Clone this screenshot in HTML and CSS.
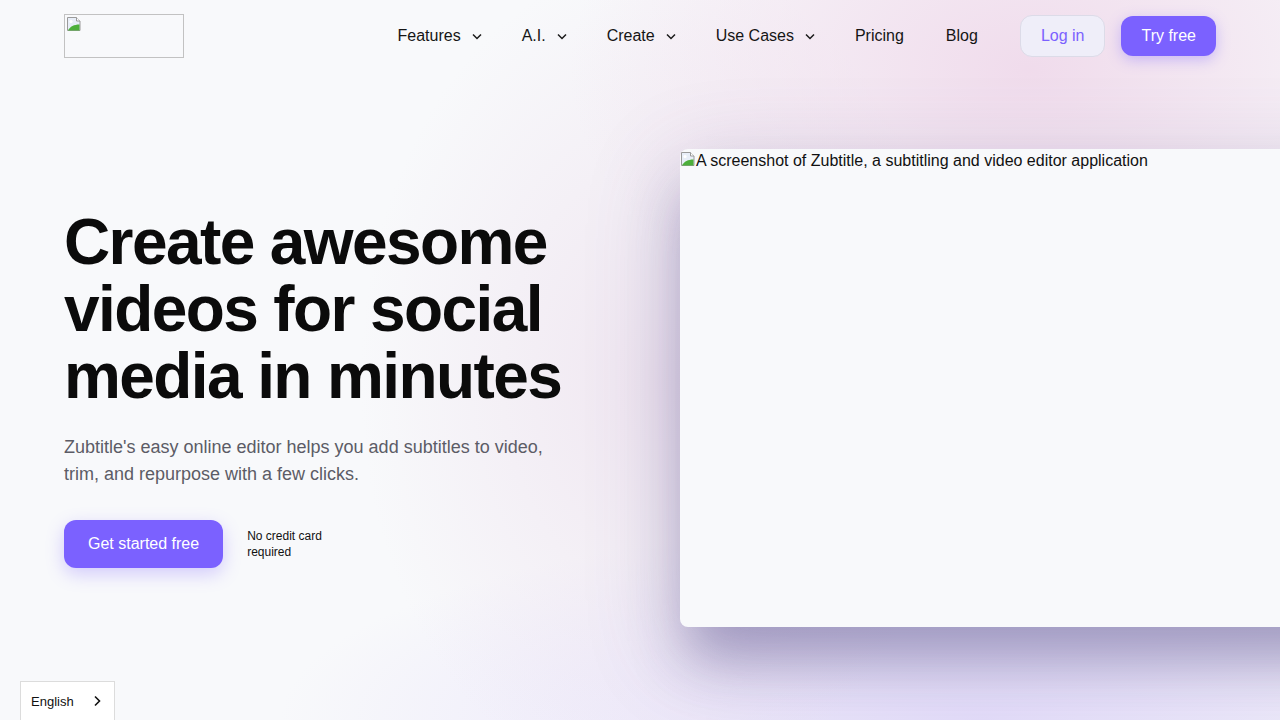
FILE: index.html
```html
<!DOCTYPE html>
<html lang="en">
<head>
<meta charset="utf-8">
<title>Zubtitle</title>
<link rel="stylesheet" href="styles.css">
</head>
<body>
<div class="glow"></div>
<header class="header">
  <a class="logo" href="#">
    <svg class="broken" width="16" height="16" viewBox="0 0 16 16"><path d="M1.5 1.5h9l3.5 3.5v9.5h-12.5z" fill="#e8eef8" stroke="#9a9a9a"/><path d="M10.5 1.5v3.5h3.5" fill="#fff" stroke="#9a9a9a"/><path d="M2 14.5c2-4 6-6 11.5-6v6z" fill="#4caf3a"/><circle cx="5" cy="5.5" r="1.6" fill="#fff"/></svg>
  </a>
  <div class="right">
    <nav class="nav">
      <a class="nav-item" href="#">Features<svg class="chev" viewBox="0 0 12 12"><path d="M2 4.5l4 4 4-4" fill="none" stroke="#1a1a1a" stroke-width="1.5"/></svg></a>
      <a class="nav-item" href="#">A.I.<svg class="chev" viewBox="0 0 12 12"><path d="M2 4.5l4 4 4-4" fill="none" stroke="#1a1a1a" stroke-width="1.5"/></svg></a>
      <a class="nav-item" href="#">Create<svg class="chev" viewBox="0 0 12 12"><path d="M2 4.5l4 4 4-4" fill="none" stroke="#1a1a1a" stroke-width="1.5"/></svg></a>
      <a class="nav-item" href="#">Use Cases<svg class="chev" viewBox="0 0 12 12"><path d="M2 4.5l4 4 4-4" fill="none" stroke="#1a1a1a" stroke-width="1.5"/></svg></a>
      <a class="nav-item plain" href="#">Pricing</a>
      <a class="nav-item plain" href="#">Blog</a>
    </nav>
    <div class="actions">
      <a class="btn-login" href="#">Log in</a>
      <a class="btn-try" href="#">Try free</a>
    </div>
  </div>
</header>

<main class="hero">
  <div class="hero-left">
    <h1 class="title">Create awesome videos for social media in minutes</h1>
    <p class="lead">Zubtitle's easy online editor helps you add subtitles to video, trim, and repurpose with a few clicks.</p>
    <div class="cta">
      <a class="btn-start" href="#">Get started free</a>
      <span class="note">No credit card required</span>
    </div>
  </div>
  <div class="hero-right">
    <div class="shot">
      <svg class="broken" width="16" height="16" viewBox="0 0 16 16"><path d="M1.5 1.5h9l3.5 3.5v9.5h-12.5z" fill="#e8eef8" stroke="#9a9a9a"/><path d="M10.5 1.5v3.5h3.5" fill="#fff" stroke="#9a9a9a"/><path d="M2 14.5c2-4 6-6 11.5-6v6z" fill="#4caf3a"/><circle cx="5" cy="5.5" r="1.6" fill="#fff"/></svg><span>A screenshot of Zubtitle, a subtitling and video editor application</span>
    </div>
  </div>
</main>

<div class="lang">
  <span>English</span>
  <svg width="12" height="12" viewBox="0 0 12 12"><path d="M4 1.5l4.5 4.5-4.5 4.5" fill="none" stroke="#111" stroke-width="1.6"/></svg>
</div>
</body>
</html>
```

FILE: styles.css
```css
* { box-sizing: border-box; }

html, body {
  margin: 0;
  padding: 0;
  width: 1280px;
  height: 720px;
  overflow: hidden;
}

body {
  position: relative;
  background: #f8f9fb;
  font-family: "Liberation Sans", Arial, sans-serif;
  color: #111;
}

a { text-decoration: none; color: inherit; }

.glow {
  position: absolute;
  inset: 0;
  pointer-events: none;
  background:
    radial-gradient(ellipse 460px 300px at 1030px 70px, rgba(238, 212, 232, 0.8), rgba(238, 212, 232, 0) 100%),
    radial-gradient(ellipse 300px 420px at 660px 380px, rgba(236, 222, 236, 0.7), rgba(236, 222, 236, 0) 100%),
    radial-gradient(ellipse 700px 200px at 980px 720px, rgba(226, 218, 250, 0.9), rgba(226, 218, 250, 0) 100%);
}

.header {
  position: relative;
  height: 72px;
  padding: 0 64px;
  display: flex;
  align-items: center;
  justify-content: space-between;
}

.logo {
  width: 120px;
  height: 44px;
  border: 1px solid #c2c2c2;
  display: block;
  padding: 1px;
}

.broken { display: block; flex: none; }

.right {
  display: flex;
  align-items: center;
}

.nav {
  display: flex;
  align-items: center;
  gap: 39px;
}

.nav-item {
  display: flex;
  align-items: center;
  font-size: 16px;
  color: #151515;
  line-height: 20px;
}

.chev {
  width: 12px;
  height: 12px;
  margin-left: 10px;
}

.nav-item.plain + .nav-item.plain { margin-left: 3px; }

.actions {
  display: flex;
  align-items: center;
  gap: 16px;
  margin-left: 42px;
}

.btn-login {
  height: 42px;
  padding: 0 20px;
  border: 1px solid #dcdbe8;
  border-radius: 12px;
  background: #efeef9;
  color: #7b61ff;
  font-size: 16px;
  display: flex;
  align-items: center;
}

.btn-try {
  height: 40px;
  padding: 0 20px;
  border-radius: 12px;
  background: #7b61ff;
  color: #fff;
  font-size: 16px;
  display: flex;
  align-items: center;
  box-shadow: 0 4px 14px rgba(123, 97, 255, 0.35);
}

.hero {
  position: relative;
  display: grid;
  grid-template-columns: 552px 1fr;
  column-gap: 64px;
  align-items: center;
  padding: 77px 0 0 64px;
}

.title {
  margin: 0;
  font-size: 64px;
  line-height: 67px;
  font-weight: 700;
  letter-spacing: -0.025em;
  color: #0b0b0b;
}

.lead {
  margin: 24px 0 0;
  max-width: 500px;
  font-size: 18px;
  line-height: 27px;
  color: #5c5c66;
}

.cta {
  margin-top: 32px;
  display: flex;
  align-items: center;
  gap: 24px;
}

.btn-start {
  height: 48px;
  padding: 0 24px;
  border-radius: 12px;
  background: #7b61ff;
  color: #fff;
  font-size: 16px;
  display: flex;
  align-items: center;
  box-shadow: 0 6px 18px rgba(123, 97, 255, 0.3);
}

.note {
  width: 90px;
  font-size: 12px;
  line-height: 16px;
  color: #111;
}

.hero-right {
  width: 620px;
}

.shot {
  width: 720px;
  height: 478px;
  background: #f8f9fb;
  border-radius: 8px 0 0 8px;
  display: flex;
  align-items: flex-start;
  font-size: 16px;
  line-height: 23px;
  color: #111;
  box-shadow:
    0 40px 50px -8px rgba(60, 50, 120, 0.34),
    0 24px 90px 8px rgba(90, 70, 140, 0.2);
}

.shot .broken { margin-top: 2px; }

.lang {
  position: absolute;
  left: 20px;
  top: 681px;
  width: 95px;
  height: 40px;
  background: #fff;
  border: 1px solid #dcdcdc;
  display: flex;
  align-items: center;
  justify-content: space-between;
  padding: 0 11px 0 10px;
  font-size: 13px;
  color: #111;
}
```
